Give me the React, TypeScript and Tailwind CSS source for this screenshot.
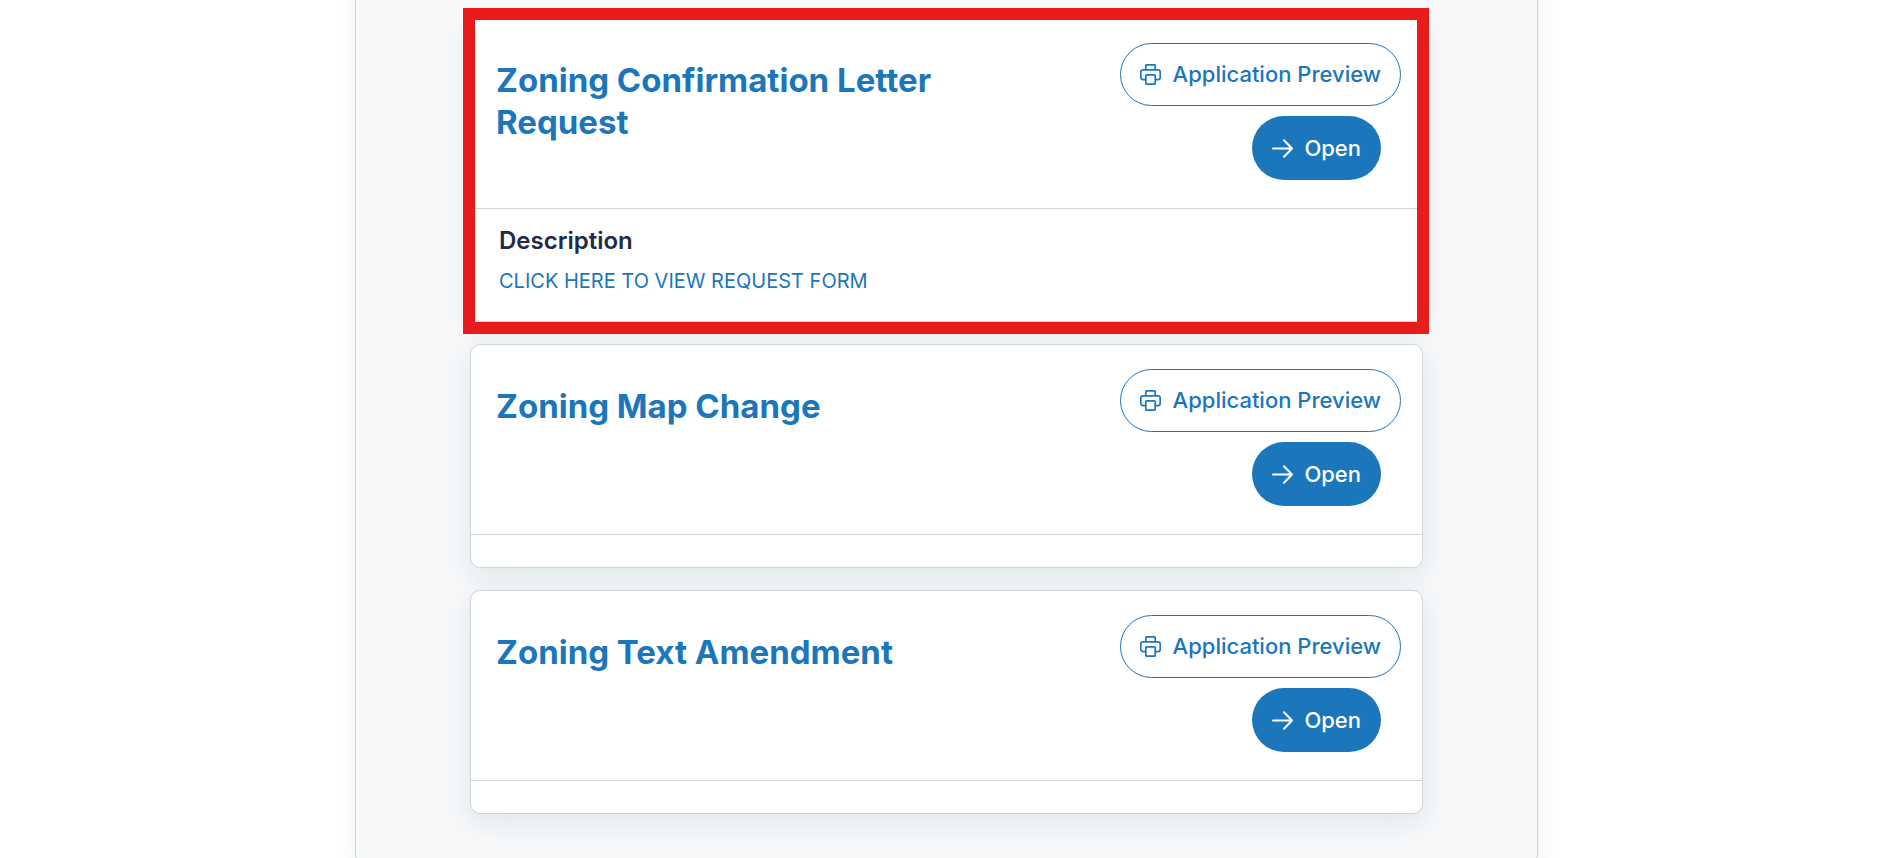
type Application = {
  title: string;
  link?: string;
};

const applications: Application[] = [
  { title: "Zoning Confirmation Letter Request", link: "CLICK HERE TO VIEW REQUEST FORM" },
  { title: "Zoning Map Change" },
  { title: "Zoning Text Amendment" },
];

function PrintIcon() {
  return (
    <svg className="size-[21px] shrink-0" viewBox="0 0 21 21" fill="none" stroke="currentColor" strokeWidth="1.7" strokeLinejoin="round" aria-hidden="true">
      <path d="M5.8 5.8V1.8a1 1 0 0 1 1-1h7.4a1 1 0 0 1 1 1v4" />
      <path d="M5.8 15.6H3a2.2 2.2 0 0 1-2.2-2.2V8A2.2 2.2 0 0 1 3 5.8h15A2.2 2.2 0 0 1 20.2 8v5.4a2.2 2.2 0 0 1-2.2 2.2h-2.8" />
      <rect x="5.8" y="10.8" width="9.4" height="9.4" rx="0.8" />
    </svg>
  );
}

function ArrowIcon() {
  return (
    <svg className="size-[21px] shrink-0" viewBox="0 0 21 21" fill="none" stroke="currentColor" strokeWidth="2" strokeLinecap="round" strokeLinejoin="round" aria-hidden="true">
      <path d="M1 10.5h19M12 2.3l8 8.2-8 8.2" />
    </svg>
  );
}

function ApplicationCard({ title, link }: Application) {
  return (
    <article className="relative rounded-[10px] border border-[#ced4da] bg-white shadow-[0_8px_28px_rgba(10,50,50,0.09)]">
      <header className="flex items-start justify-between border-b border-[#ced4da] pt-6 pr-[21px] pb-7 pl-[25px]">
        <h2 className="w-[480px] pt-4 text-[33px] leading-[42px] font-bold text-[#1b76bb]">{title}</h2>
        <div className="flex flex-col items-end gap-[10px]">
          <button type="button" className="flex h-[63px] items-center gap-3 rounded-full border border-[#1b76bb] bg-white px-[19px] text-[22px] font-medium text-[#1b76bb]">
            <PrintIcon />
            Application Preview
          </button>
          <button type="button" className="mr-5 flex h-[64px] items-center gap-[11px] rounded-full bg-[#1b76bb] px-5 text-[22px] font-medium text-white">
            <ArrowIcon />
            Open
          </button>
        </div>
      </header>
      {link ? (
        <div className="px-7 pt-4 pb-[22px]">
          <h3 className="text-[24px] leading-[32px] font-semibold text-[#212b45]">Description</h3>
          <a href="#request-form" className="mt-[7px] block text-[20px] leading-[35px] text-[#1b76bb]">{link}</a>
        </div>
      ) : (
        <div className="h-8" />
      )}
      {link && <div className="pointer-events-none absolute -top-[11px] -right-[7px] -bottom-[13px] -left-2 border-[12px] border-[#e81c1c]" />}
    </article>
  );
}

export default function App() {
  return (
    <main className="h-screen overflow-hidden bg-white pr-[5px] font-['Inter',sans-serif]">
      <section className="mx-auto -mt-10 w-full max-w-[1183px] rounded-[10px] border border-[#ced4da] bg-[#f6f8fa] px-[114px] pt-[57px] pb-[50px] shadow-[0_8px_24px_rgba(10,50,50,0.07)]">
        <div className="flex flex-col gap-[22px]">
          {applications.map((application) => (
            <ApplicationCard key={application.title} {...application} />
          ))}
        </div>
      </section>
    </main>
  );
}
